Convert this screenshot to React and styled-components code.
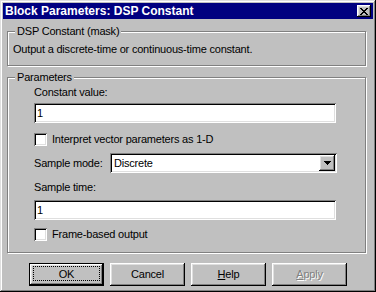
import React from 'react';
import styled, { createGlobalStyle, css } from 'styled-components';

const GlobalStyle = createGlobalStyle`
  html, body {
    margin: 0;
    padding: 0;
    background: #c0c0c0;
  }
  body {
    font-family: "Liberation Sans", Arial, sans-serif;
    font-size: 11px;
    letter-spacing: -0.2px;
    color: #000;
  }
`;

const raised = css`
  box-shadow: inset -1px -1px 0 #000, inset 1px 1px 0 #fff,
    inset -2px -2px 0 #808080, inset 2px 2px 0 #dfdfdf;
`;

const sunken = css`
  box-shadow: inset 1px 1px 0 #808080, inset -1px -1px 0 #fff,
    inset 2px 2px 0 #000, inset -2px -2px 0 #dfdfdf;
`;

const Window = styled.div`
  width: 376px;
  height: 292px;
  box-sizing: border-box;
  padding: 3px;
  background: #c0c0c0;
  display: flex;
  flex-direction: column;
  box-shadow: inset -1px -1px 0 #000, inset 1px 1px 0 #dfdfdf,
    inset -2px -2px 0 #808080, inset 2px 2px 0 #fff;
`;

const TitleBar = styled.div`
  height: 16px;
  flex: none;
  background: #000080;
  display: flex;
  align-items: center;
  justify-content: space-between;
  padding: 0 2px 0 2px;
`;

const Title = styled.span`
  color: #fff;
  font-weight: bold;
  font-size: 12px;
  letter-spacing: 0;
  line-height: 16px;
`;

const CloseButton = styled.div`
  width: 14px;
  height: 12px;
  background: #c0c0c0;
  display: flex;
  align-items: center;
  justify-content: center;
  ${raised}
`;

const Body = styled.div`
  padding: 6px 7px 0 4px;
  display: flex;
  flex-direction: column;
`;

const Group = styled.fieldset`
  margin: ${p => p.$top || 0}px 0 0 0;
  min-width: 0;
  border: 1px solid #808080;
  box-shadow: inset 1px 1px 0 #fff, 1px 1px 0 #fff;
  padding: ${p => p.$pt}px 5px ${p => p.$pb}px 5px;
`;

const Legend = styled.legend`
  margin-left: 2px;
  padding: 0 2px;
  line-height: 13px;
  background: #c0c0c0;
`;

const Text = styled.div`
  line-height: 13px;
`;

const Fields = styled.div`
  padding-left: 21px;
  display: flex;
  flex-direction: column;
`;

const Label = styled.div`
  line-height: 13px;
  margin-top: ${p => p.$top || 0}px;
`;

const TextField = styled.div`
  box-sizing: border-box;
  width: 302px;
  height: 20px;
  margin-top: ${p => p.$top || 0}px;
  padding: 0 3px;
  background: #fff;
  line-height: 20px;
  ${sunken}
`;

const CheckRow = styled.label`
  display: flex;
  align-items: center;
  gap: 5px;
  height: 13px;
  line-height: 13px;
  margin-top: ${p => p.$top || 0}px;
`;

const CheckBox = styled.span`
  width: 13px;
  height: 13px;
  flex: none;
  background: #fff;
  ${sunken}
`;

const SelectRow = styled.div`
  display: flex;
  align-items: center;
  margin-top: ${p => p.$top || 0}px;
`;

const SelectLabel = styled.span`
  width: 76px;
  flex: none;
  line-height: 13px;
`;

const Select = styled.div`
  box-sizing: border-box;
  width: 227px;
  height: 20px;
  background: #fff;
  padding: 2px 2px 2px 4px;
  display: flex;
  align-items: center;
  justify-content: space-between;
  ${sunken}
`;

const DropButton = styled.span`
  width: 16px;
  height: 16px;
  background: #c0c0c0;
  display: flex;
  align-items: center;
  justify-content: center;
  ${raised}
`;

const ButtonRow = styled.div`
  display: flex;
  gap: 6px;
  padding-left: 22px;
  margin-top: 10px;
`;

const Button = styled.div`
  position: relative;
  box-sizing: border-box;
  width: 75px;
  height: 23px;
  padding-bottom: 2px;
  display: flex;
  align-items: center;
  justify-content: center;
  background: #c0c0c0;
  color: ${p => (p.$disabled ? '#808080' : '#000')};
  text-shadow: ${p => (p.$disabled ? '1px 1px 0 #fff' : 'none')};
  ${raised}

  ${p =>
    p.$default &&
    css`
      box-shadow: inset 0 0 0 1px #000, inset -2px -2px 0 #000,
        inset 2px 2px 0 #fff, inset -3px -3px 0 #808080,
        inset 3px 3px 0 #dfdfdf;

      &::after {
        content: '';
        position: absolute;
        left: 4px;
        top: 3px;
        right: 4px;
        bottom: 5px;
        border: 1px dotted #000;
      }
    `}

  u {
    text-decoration: underline;
  }
`;

const CloseGlyph = () => (
  <svg width="8" height="7" viewBox="0 0 8 7" shapeRendering="crispEdges">
    {[
      [0, 0, 2], [6, 0, 2],
      [1, 1, 2], [5, 1, 2],
      [2, 2, 4],
      [3, 3, 2],
      [2, 4, 4],
      [1, 5, 2], [5, 5, 2],
      [0, 6, 2], [6, 6, 2],
    ].map(([x, y, w], i) => (
      <rect key={i} x={x} y={y} width={w} height="1" fill="#000" />
    ))}
  </svg>
);

const DownArrow = () => (
  <svg width="7" height="4" viewBox="0 0 7 4" shapeRendering="crispEdges">
    <rect x="0" y="0" width="7" height="1" fill="#000" />
    <rect x="1" y="1" width="5" height="1" fill="#000" />
    <rect x="2" y="2" width="3" height="1" fill="#000" />
    <rect x="3" y="3" width="1" height="1" fill="#000" />
  </svg>
);

export default function App() {
  return (
    <>
      <GlobalStyle />
      <Window>
        <TitleBar>
          <Title>Block Parameters: DSP Constant</Title>
          <CloseButton>
            <CloseGlyph />
          </CloseButton>
        </TitleBar>
        <Body>
          <Group $pt={5} $pb={9}>
            <Legend>DSP Constant (mask)</Legend>
            <Text>Output a discrete-time or continuous-time constant.</Text>
          </Group>
          <Group $top={5} $pt={2} $pb={11}>
            <Legend>Parameters</Legend>
            <Fields>
              <Label>Constant value:</Label>
              <TextField $top={4}>1</TextField>
              <CheckRow $top={10}>
                <CheckBox />
                Interpret vector parameters as 1-D
              </CheckRow>
              <SelectRow $top={7}>
                <SelectLabel>Sample mode:</SelectLabel>
                <Select>
                  <span>Discrete</span>
                  <DropButton>
                    <DownArrow />
                  </DropButton>
                </Select>
              </SelectRow>
              <Label $top={8}>Sample time:</Label>
              <TextField $top={6}>1</TextField>
              <CheckRow $top={8}>
                <CheckBox />
                Frame-based output
              </CheckRow>
            </Fields>
          </Group>
          <ButtonRow>
            <Button $default>OK</Button>
            <Button>Cancel</Button>
            <Button>
              <span><u>H</u>elp</span>
            </Button>
            <Button $disabled>
              <span><u>A</u>pply</span>
            </Button>
          </ButtonRow>
        </Body>
      </Window>
    </>
  );
}
